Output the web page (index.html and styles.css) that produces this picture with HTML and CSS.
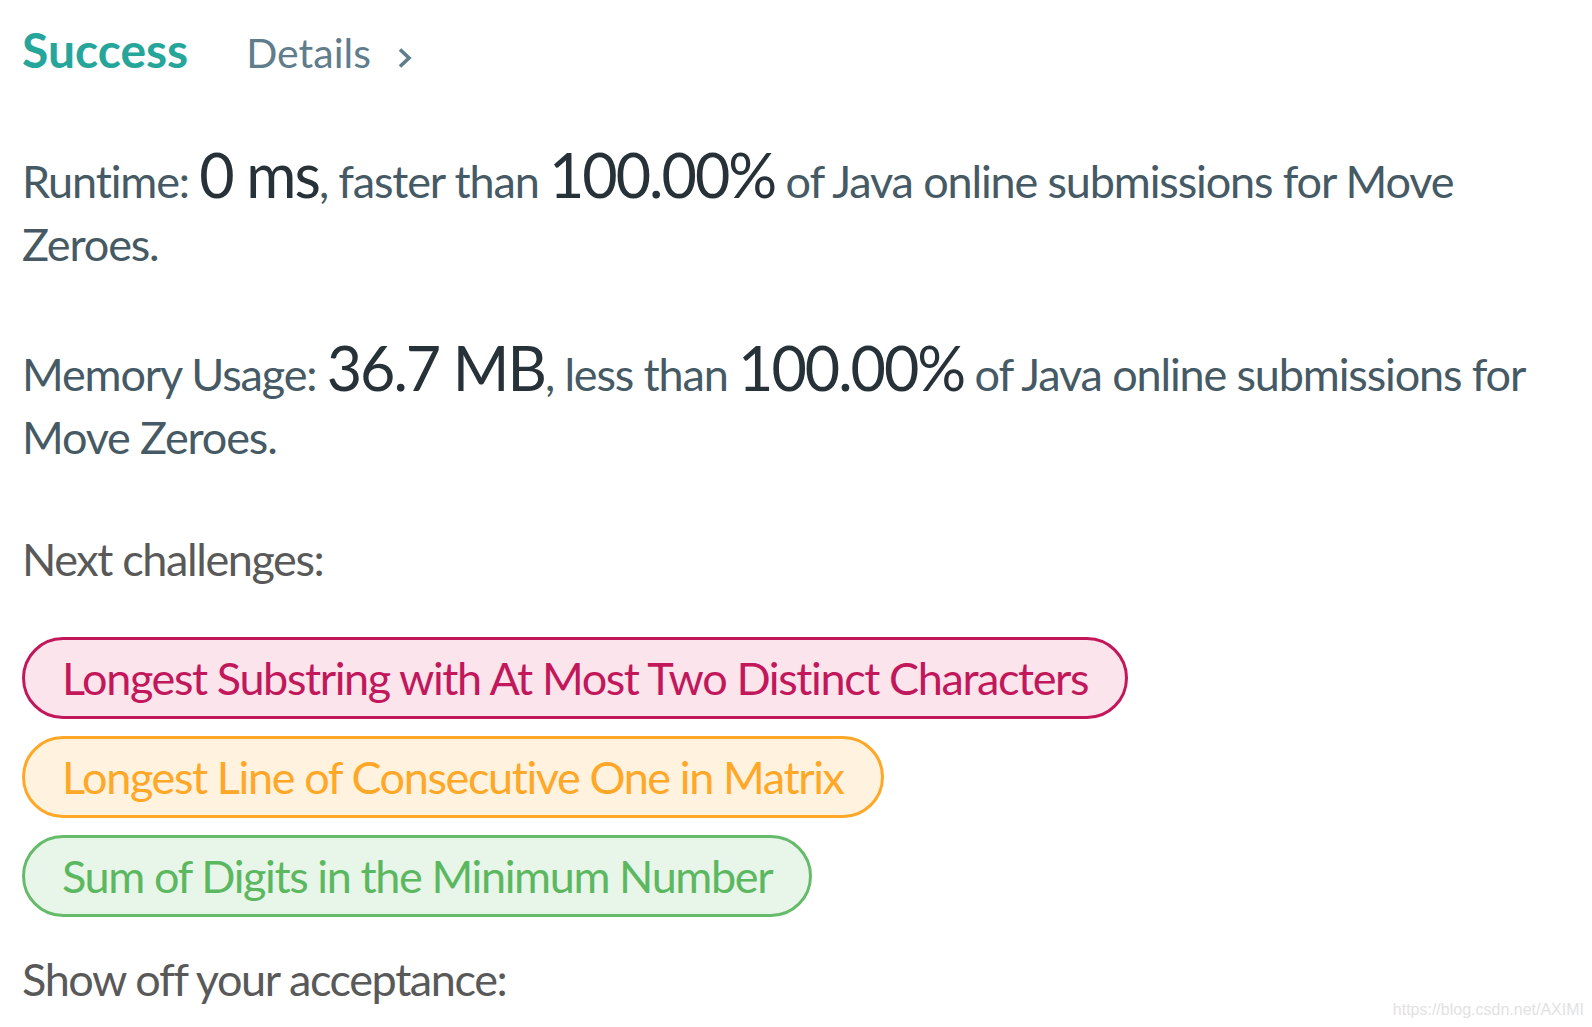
FILE: index.html
```html
<!DOCTYPE html>
<html lang="en">
<head>
<meta charset="utf-8">
<title>Success</title>
<link rel="stylesheet" href="styles.css">
</head>
<body>
<main class="page">
  <header class="result-head">
    <span class="status">Success</span>
    <a class="details" href="#">Details
      <svg class="chev" width="16" height="22" viewBox="0 0 16 22"><path d="M3 2.5 L12 11 L3 19.5" fill="none" stroke="currentColor" stroke-width="3.6"/></svg>
    </a>
  </header>

  <p class="stat">Runtime: <span class="big">0 ms</span>, faster than <span class="big">100.00%</span> of Java online submissions for Move Zeroes.</p>

  <p class="stat stat-mem">Memory Usage: <span class="big">36.7 MB</span>, less than <span class="big">100.00%</span> of Java online submissions for Move Zeroes.</p>

  <p class="label">Next challenges:</p>

  <div class="challenges">
    <a class="pill pill-hard" href="#">Longest Substring with At Most Two Distinct Characters</a>
    <a class="pill pill-medium" href="#">Longest Line of Consecutive One in Matrix</a>
    <a class="pill pill-easy" href="#">Sum of Digits in the Minimum Number</a>
  </div>

  <p class="label label-share">Show off your acceptance:</p>
</main>
<div class="watermark">https://blog.csdn.net/AXIMI</div>
</body>
</html>
```

FILE: styles.css
```css
html, body {
  margin: 0;
  padding: 0;
  background: #ffffff;
}

body {
  font-family: Lato, "Noto Sans", sans-serif;
  color: #455a64;
  overflow: hidden;
}

.page {
  padding: 18px 24px 0 22px;
}

.result-head {
  display: flex;
  align-items: baseline;
  height: 63px;
  line-height: 63px;
}

.status {
  font-size: 48px;
  font-weight: 700;
  color: #26a69a;
}

.details {
  margin-left: 58px;
  font-size: 41px;
  color: #607d8b;
  text-decoration: none;
  display: inline-flex;
  align-items: baseline;
}

.chev {
  margin-left: 26px;
  color: #607d8b;
  align-self: center;
  position: relative;
  top: 5px;
}

.stat {
  margin: 69px 0 0;
  font-size: 45px;
  line-height: 63px;
  letter-spacing: -1.15px;
}

.stat-mem {
  margin-top: 67px;
}

.big {
  font-size: 61px;
  line-height: 40px;
  letter-spacing: -2px;
  color: #263238;
}

.label {
  margin: 59px 0 0;
  font-size: 45px;
  line-height: 63px;
  letter-spacing: -1.4px;
  color: #595959;
}

.challenges {
  margin-top: 46px;
  display: flex;
  flex-direction: column;
  align-items: flex-start;
  gap: 17px;
}

.pill {
  display: block;
  height: 76px;
  line-height: 76px;
  padding: 0 37px;
  border: 3px solid;
  border-radius: 42px;
  font-size: 45px;
  letter-spacing: -1.4px;
  text-decoration: none;
  white-space: nowrap;
}

.pill-hard {
  color: #c2185b;
  border-color: #c2185b;
  background: #fce4ec;
}

.pill-medium {
  color: #ffa726;
  border-color: #ffa726;
  background: #fff3e0;
}

.pill-easy {
  color: #5cb860;
  border-color: #66bb6a;
  background: #e8f5e9;
}

.label-share {
  margin-top: 31px;
}

.watermark {
  position: absolute;
  right: 8px;
  bottom: 8px;
  font-family: "Liberation Sans", Arial, sans-serif;
  font-size: 16px;
  color: #e2e2e2;
}
```
